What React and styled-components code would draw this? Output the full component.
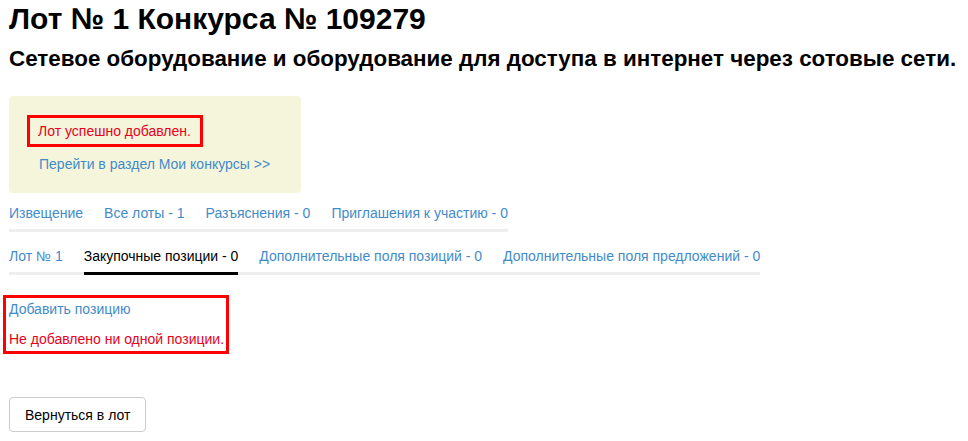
import React from "react";
import styled, { createGlobalStyle } from "styled-components";

const GlobalStyle = createGlobalStyle`
  body {
    margin: 0;
    background: #ffffff;
    font-family: "Liberation Sans", Arial, sans-serif;
    font-size: 14px;
    color: #333333;
  }
`;

const Page = styled.div`
  padding: 0 9px;
  width: 968px;
  box-sizing: border-box;
`;

const Title = styled.h1`
  margin: 0;
  padding-top: 2px;
  font-size: 30px;
  line-height: 34px;
  font-weight: bold;
  color: #000;
  white-space: nowrap;
`;

const Subtitle = styled.h2`
  margin: 10px 0 0;
  font-size: 22.4px;
  line-height: 26px;
  font-weight: bold;
  color: #000;
  white-space: nowrap;
`;

const Alert = styled.div`
  margin-top: 24px;
  width: 292px;
  height: 97px;
  box-sizing: border-box;
  background: #f5f5dc;
  border-radius: 4px;
  padding: 19px 0 0 18px;
`;

const Highlight = styled.div`
  display: inline-block;
  border: 3px solid #ff0000;
  padding: ${(p) => p.$pad || "0"};
  line-height: 20px;
`;

const ErrorText = styled.div`
  color: #e8001c;
  margin-top: ${(p) => p.$gap || "0"};
`;

const Link = styled.a`
  color: #428bca;
  text-decoration: none;
  cursor: pointer;
  display: block;
`;

const AlertLink = styled(Link)`
  margin: 9px 0 0 12px;
`;

const Tabs = styled.ul`
  list-style: none;
  margin: ${(p) => p.$margin || "0"};
  padding: 0;
  display: inline-flex;
  gap: 21px;
  border-bottom: 3px solid #eeeeee;
`;

const Tab = styled.li`
  padding: 4px 0 6px;
  margin-bottom: -3px;
  border-bottom: 3px solid ${(p) => (p.$active ? "#000" : "transparent")};
  color: ${(p) => (p.$active ? "#000" : "#428bca")};
  line-height: 20px;
  cursor: pointer;
`;

const TabBlock = styled.div``;

const Positions = styled.div`
  margin: 20px 0 0 -6px;
`;

const Button = styled.button`
  display: block;
  margin-top: 43px;
  height: 35px;
  padding: 0 15px;
  font-family: "Liberation Sans", Arial, sans-serif;
  font-size: 14px;
  color: #000;
  background: #fff;
  border: 1px solid #cccccc;
  border-radius: 4px;
  cursor: pointer;
`;

export default function App() {
  const topTabs = [
    "Извещение",
    "Все лоты - 1",
    "Разъяснения - 0",
    "Приглашения к участию - 0",
  ];
  const lotTabs = [
    "Лот № 1",
    "Закупочные позиции - 0",
    "Дополнительные поля позиций - 0",
    "Дополнительные поля предложений - 0",
  ];

  return (
    <Page>
      <GlobalStyle />
      <Title>Лот № 1 Конкурса № 109279</Title>
      <Subtitle>
        Сетевое оборудование и оборудование для доступа в интернет через сотовые сети.
      </Subtitle>
      <Alert>
        <Highlight $pad="3px 9px 3px 8px">
          <ErrorText>Лот успешно добавлен.</ErrorText>
        </Highlight>
        <AlertLink>Перейти в раздел Мои конкурсы &gt;&gt;</AlertLink>
      </Alert>
      <TabBlock>
        <Tabs $margin="6px 0 0">
          {topTabs.map((t) => (
            <Tab key={t}>{t}</Tab>
          ))}
        </Tabs>
      </TabBlock>
      <TabBlock>
        <Tabs $margin="10px 0 0">
          {lotTabs.map((t, i) => (
            <Tab key={t} $active={i === 1}>
              {t}
            </Tab>
          ))}
        </Tabs>
      </TabBlock>
      <Positions>
        <Highlight $pad="1px 2px 2px 3px">
          <Link>Добавить позицию</Link>
          <ErrorText $gap="10px">Не добавлено ни одной позиции.</ErrorText>
        </Highlight>
      </Positions>
      <Button>Вернуться в лот</Button>
    </Page>
  );
}
